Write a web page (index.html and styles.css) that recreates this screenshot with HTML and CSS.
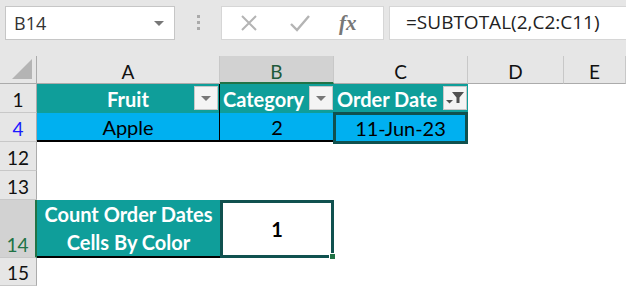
FILE: index.html
```html
<!DOCTYPE html>
<html>
<head>
    <title>Count Cells By Color</title>
    <link rel="stylesheet" href="styles.css">
</head>
<body>
    <!-- Formula bar -->
    <div class="toolbar">
        <div class="name-box">
            <span>B14</span>
            <span class="caret"></span>
        </div>
        <div class="grip"><i></i><i></i><i></i></div>
        <div class="actions">
            <svg class="icon" width="20" height="20" viewBox="0 0 20 20">
                <path d="M3 3 L17 17 M17 3 L3 17" stroke="#b4b4b4" stroke-width="2" fill="none"/>
            </svg>
            <svg class="icon" width="22" height="20" viewBox="0 0 22 20">
                <path d="M2 11 L8 17 L20 3" stroke="#b4b4b4" stroke-width="2.4" fill="none"/>
            </svg>
            <span class="fx">fx</span>
        </div>
        <div class="formula">=SUBTOTAL(2,C2:C11)</div>
    </div>

    <!-- Sheet -->
    <div class="sheet">
        <div class="corner"><span class="tri"></span></div>
        <div class="col-head">A</div>
        <div class="col-head active">B</div>
        <div class="col-head">C</div>
        <div class="col-head">D</div>
        <div class="col-head">E</div>

        <div class="row-head">1</div>
        <div class="cell teal bold sep">Fruit<span class="filter-btn"><span class="caret"></span></span></div>
        <div class="cell teal bold left">Category<span class="filter-btn"><span class="caret"></span></span></div>
        <div class="cell teal bold left">Order Date<span class="filter-btn"><svg width="20" height="16" viewBox="0 0 20 16"><path d="M7 2 H19 L14.5 7.5 V13 H11.5 V7.5 Z" fill="#505050"/><path d="M1 10 H8 L4.5 13.5 Z" fill="#505050"/></svg></span></div>
        <div class="cell"></div>
        <div class="cell"></div>

        <div class="row-head blue">4</div>
        <div class="cell cyan sep under">Apple</div>
        <div class="cell cyan under">2</div>
        <div class="cell cyan picked">11-Jun-23</div>
        <div class="cell"></div>
        <div class="cell"></div>

        <div class="row-head">12</div>
        <div class="cell"></div><div class="cell"></div><div class="cell"></div><div class="cell"></div><div class="cell"></div>

        <div class="row-head">13</div>
        <div class="cell"></div><div class="cell"></div><div class="cell"></div><div class="cell"></div><div class="cell"></div>

        <div class="row-head active">14</div>
        <div class="cell teal bold under label">Count Order Dates<br>Cells By Color</div>
        <div class="cell bold result">1<span class="handle"></span></div>
        <div class="cell"></div><div class="cell"></div><div class="cell"></div>

        <div class="row-head">15</div>
        <div class="cell"></div><div class="cell"></div><div class="cell"></div><div class="cell"></div><div class="cell"></div>
    </div>
</body>
</html>
```

FILE: styles.css
```css
body {
    margin: 0;
    width: 626px;
    height: 286px;
    overflow: hidden;
    background: #fff;
    font-family: "Open Sans", Arial, sans-serif;
}

/* formula bar */
.toolbar {
    height: 56px;
    background: #e6e6e6;
    display: flex;
    align-items: flex-start;
    padding-top: 6px;
    box-sizing: border-box;
}
.name-box {
    margin-left: 5px;
    width: 170px;
    height: 34px;
    background: #fff;
    border: 1px solid #c6c6c6;
    box-sizing: border-box;
    display: flex;
    align-items: center;
    justify-content: space-between;
    padding: 0 10px 0 8px;
    font-size: 18px;
    color: #333;
}
.caret {
    width: 0;
    height: 0;
    border-left: 5px solid transparent;
    border-right: 5px solid transparent;
    border-top: 5px solid #777;
}
.grip {
    width: 46px;
    display: flex;
    flex-direction: column;
    align-items: center;
    gap: 3px;
    padding-top: 9px;
}
.grip i {
    width: 3px;
    height: 3px;
    background: #aaa;
}
.actions {
    width: 163px;
    height: 34px;
    background: #fff;
    border: 1px solid #d6d6d6;
    box-sizing: border-box;
    display: flex;
    align-items: center;
    padding-left: 17px;
    gap: 30px;
}
.fx {
    font-family: "Liberation Serif", serif;
    font-style: italic;
    font-weight: bold;
    font-size: 21px;
    color: #777;
    margin-left: -2px;
}
.formula {
    margin-left: 5px;
    flex: 1;
    height: 34px;
    background: #fff;
    border: 1px solid #d6d6d6;
    border-right: none;
    box-sizing: border-box;
    padding-left: 16px;
    font-size: 19px;
    line-height: 31px;
    color: #222;
}

/* grid */
.sheet {
    display: grid;
    grid-template-columns: 37px 183px 114px 134px 96px 62px;
    grid-template-rows: 28px 29px 29px 29px 29px 58px 28px;
}
.corner {
    background: #e6e6e6;
    border-right: 1px solid #ababab;
    border-bottom: 1px solid #ababab;
    position: relative;
}
.tri {
    position: absolute;
    right: 4px;
    bottom: 4px;
    width: 0;
    height: 0;
    border-left: 20px solid transparent;
    border-bottom: 20px solid #b4b4b4;
}
.col-head {
    background: #e6e6e6;
    border-right: 1px solid #c8c8c8;
    border-bottom: 1px solid #ababab;
    display: flex;
    align-items: center;
    justify-content: center;
    font-family: "Lato", "Liberation Sans", sans-serif;
    font-size: 19px;
    color: #111;
    padding-top: 4px;
    box-sizing: border-box;
}
.col-head.active {
    background: #d2d2d2;
    border-bottom: 2px solid #217346;
    color: #1f5a3a;
}
.row-head {
    background: #e6e6e6;
    border-right: 1px solid #ababab;
    border-bottom: 1px solid #c8c8c8;
    display: flex;
    align-items: flex-end;
    justify-content: center;
    font-family: "Lato", "Liberation Sans", sans-serif;
    font-size: 19px;
    color: #111;
    padding-bottom: 1px;
    box-sizing: border-box;
}
.row-head.blue {
    color: #1a1aff;
}
.row-head.active {
    background: #d2d2d2;
    border-right: 2px solid #217346;
    color: #217346;
}

.cell {
    position: relative;
    display: flex;
    align-items: center;
    justify-content: center;
    font-family: "Lato", "Liberation Sans", sans-serif;
    font-size: 20px;
    color: #000;
    box-sizing: border-box;
    white-space: nowrap;
}
.bold {
    font-weight: bold;
}
.teal {
    background: #0f9e9a;
    color: #fff;
}
.cyan {
    background: #00b0f0;
}
.left {
    justify-content: flex-start;
    padding-left: 3px;
}
.sep {
    border-right: 1px solid #000;
}
.under {
    border-bottom: 2px solid #000;
}
.picked {
    border: 3px solid #10514f;
    margin: -1px 0 -2px -1px;
}
.filter-btn {
    position: absolute;
    right: 1px;
    top: 2px;
    width: 24px;
    height: 24px;
    background: #f4f4f4;
    border: 1px solid #c8c8c8;
    box-sizing: border-box;
    display: flex;
    align-items: center;
    justify-content: center;
}
.label {
    flex-direction: column;
    line-height: 28px;
    white-space: normal;
    text-align: center;
}
.result {
    border: 3px solid #10514f;
}
.handle {
    position: absolute;
    right: -5px;
    bottom: -5px;
    width: 5px;
    height: 5px;
    background: #217346;
    border: 1px solid #fff;
}
```
